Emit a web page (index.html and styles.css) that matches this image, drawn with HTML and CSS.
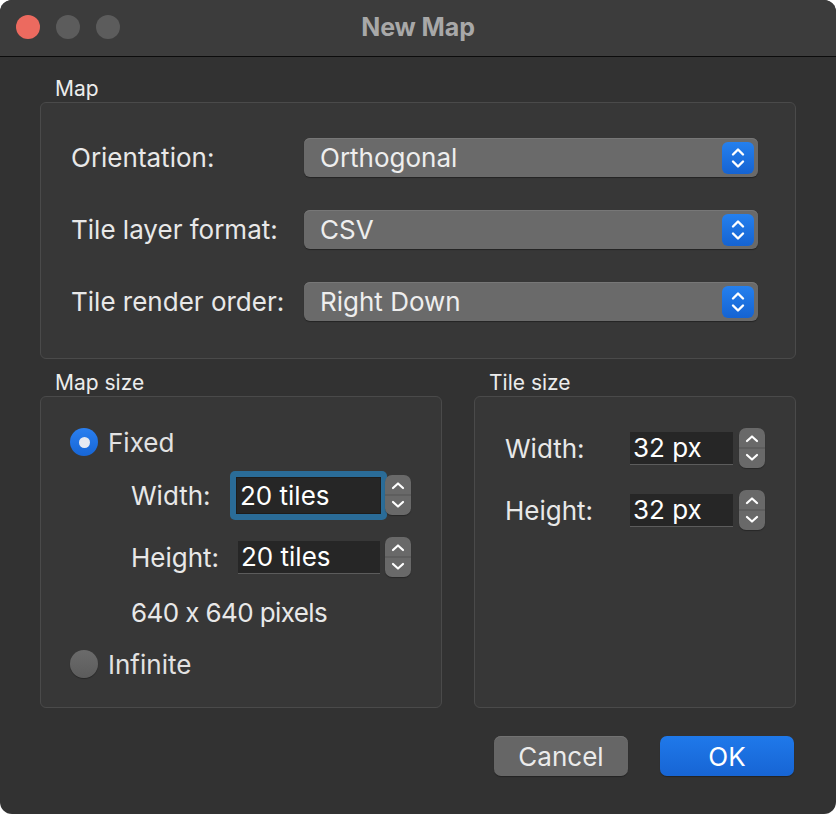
FILE: index.html
```html
<!DOCTYPE html>
<html lang="en">
<head>
<meta charset="utf-8">
<title>New Map</title>
<link rel="stylesheet" href="styles.css">
</head>
<body>
<div class="window">
  <div class="titlebar">
    <div class="lights">
      <span class="light red"></span>
      <span class="light gray"></span>
      <span class="light gray"></span>
    </div>
    <div class="title">New Map</div>
  </div>
  <div class="content">
    <div class="group-label">Map</div>
    <div class="box map-box">
      <div class="form-row">
        <span class="lbl">Orientation:</span>
        <div class="popup"><span>Orthogonal</span><span class="popup-btn"><svg width="32" height="32" viewBox="0 0 32 32"><path d="M11 12.5 L16 7.5 L21 12.5 M11 19.5 L16 24.5 L21 19.5" fill="none" stroke="#fff" stroke-width="2.4" stroke-linecap="round" stroke-linejoin="round"/></svg></span></div>
      </div>
      <div class="form-row">
        <span class="lbl">Tile layer format:</span>
        <div class="popup"><span>CSV</span><span class="popup-btn"><svg width="32" height="32" viewBox="0 0 32 32"><path d="M11 12.5 L16 7.5 L21 12.5 M11 19.5 L16 24.5 L21 19.5" fill="none" stroke="#fff" stroke-width="2.4" stroke-linecap="round" stroke-linejoin="round"/></svg></span></div>
      </div>
      <div class="form-row">
        <span class="lbl">Tile render order:</span>
        <div class="popup"><span>Right Down</span><span class="popup-btn"><svg width="32" height="32" viewBox="0 0 32 32"><path d="M11 12.5 L16 7.5 L21 12.5 M11 19.5 L16 24.5 L21 19.5" fill="none" stroke="#fff" stroke-width="2.4" stroke-linecap="round" stroke-linejoin="round"/></svg></span></div>
      </div>
    </div>

    <div class="lower">
      <div class="col">
        <div class="group-label small">Map size</div>
        <div class="box size-box">
          <div class="radio-row first">
            <span class="radio on"><span class="dot"></span></span>
            <span class="radio-text">Fixed</span>
          </div>
          <div class="spin-row r1">
            <span class="slbl">Width:</span>
            <span class="ring"><span class="field focused">20 tiles</span></span>
            <span class="stepper"><svg width="26" height="40" viewBox="0 0 26 40"><path d="M8 13 L13 8.5 L18 13 M8 27 L13 31.5 L18 27" fill="none" stroke="#fff" stroke-width="2.2" stroke-linecap="round" stroke-linejoin="round"/><line x1="0" y1="20" x2="26" y2="20" stroke="#555" stroke-width="1"/></svg></span>
          </div>
          <div class="spin-row r2">
            <span class="slbl">Height:</span>
            <span class="field">20 tiles</span>
            <span class="stepper"><svg width="26" height="40" viewBox="0 0 26 40"><path d="M8 13 L13 8.5 L18 13 M8 27 L13 31.5 L18 27" fill="none" stroke="#fff" stroke-width="2.2" stroke-linecap="round" stroke-linejoin="round"/><line x1="0" y1="20" x2="26" y2="20" stroke="#555" stroke-width="1"/></svg></span>
          </div>
          <div class="pixels">640 x 640 pixels</div>
          <div class="radio-row last">
            <span class="radio off"></span>
            <span class="radio-text">Infinite</span>
          </div>
        </div>
      </div>
      <div class="col">
        <div class="group-label small">Tile size</div>
        <div class="box tile-box">
          <div class="spin-row t1">
            <span class="tlbl">Width:</span>
            <span class="field short">32 px</span>
            <span class="stepper"><svg width="26" height="40" viewBox="0 0 26 40"><path d="M8 13 L13 8.5 L18 13 M8 27 L13 31.5 L18 27" fill="none" stroke="#fff" stroke-width="2.2" stroke-linecap="round" stroke-linejoin="round"/><line x1="0" y1="20" x2="26" y2="20" stroke="#555" stroke-width="1"/></svg></span>
          </div>
          <div class="spin-row t2">
            <span class="tlbl">Height:</span>
            <span class="field short">32 px</span>
            <span class="stepper"><svg width="26" height="40" viewBox="0 0 26 40"><path d="M8 13 L13 8.5 L18 13 M8 27 L13 31.5 L18 27" fill="none" stroke="#fff" stroke-width="2.2" stroke-linecap="round" stroke-linejoin="round"/><line x1="0" y1="20" x2="26" y2="20" stroke="#555" stroke-width="1"/></svg></span>
          </div>
        </div>
      </div>
    </div>

    <div class="buttons">
      <button class="btn cancel">Cancel</button>
      <button class="btn ok">OK</button>
    </div>
  </div>
</div>
</body>
</html>
```

FILE: styles.css
```css
* { box-sizing: border-box; }
html, body { margin: 0; padding: 0; background: #ffffff; }
body {
  font-family: Inter, "Helvetica Neue", "Liberation Sans", sans-serif;
  font-feature-settings: "calt" 0;
  color: #e6e6e6;
}
.window {
  width: 836px;
  height: 814px;
  background: #323232;
  border-radius: 12px;
  overflow: hidden;
  display: flex;
  flex-direction: column;
}
.titlebar {
  height: 57px;
  flex: none;
  background: #3c3c3c;
  border-bottom: 1px solid #0c0c0c;
  display: flex;
  align-items: center;
  justify-content: center;
  position: relative;
}
.lights {
  position: absolute;
  left: 16px;
  top: 15px;
  display: flex;
  gap: 16px;
}
.light {
  width: 24px;
  height: 24px;
  border-radius: 50%;
  display: block;
}
.light.red { background: #ec6a5f; }
.light.gray { background: #5c5c5c; }
.title {
  font-size: 25px;
  font-weight: 700;
  color: #a8a8a8;
  margin-top: -2px;
  letter-spacing: -0.1px;
}
.content {
  padding: 0 40px;
  display: flex;
  flex-direction: column;
}
.group-label {
  font-size: 21px;
  line-height: 24px;
  height: 24px;
  margin-top: 20px;
  padding-left: 15px;
  color: #ececec;
  margin-bottom: 1px;
}
.box {
  background: #373737;
  border: 1px solid #4a4a4a;
  border-radius: 6px;
}
.map-box {
  height: 257px;
  padding: 35px 37px 0 30px;
  display: flex;
  flex-direction: column;
  gap: 33px;
}
.form-row {
  height: 39px;
  display: flex;
  align-items: center;
}
.lbl {
  width: 233px;
  font-size: 26px;
  color: #e8e8e8;
}
.popup {
  flex: 1;
  height: 39px;
  background: #6a6a6a;
  border-radius: 6px;
  box-shadow: inset 0 1px 0 #777, 0 1px 1px rgba(0,0,0,0.35);
  display: flex;
  align-items: center;
  justify-content: space-between;
  padding: 0 4px 0 16px;
  font-size: 26px;
  color: #eeeeee;
}
.popup-btn {
  width: 32px;
  height: 32px;
  border-radius: 6px;
  background: linear-gradient(#2580ee, #1563d2);
  display: flex;
  align-items: center;
  justify-content: center;
}
.lower {
  display: grid;
  grid-template-columns: 402px 322px;
  gap: 32px;
  margin-top: 12px;
}
.group-label.small {
  margin-top: 0;
  height: 24px;
}
.size-box {
  height: 312px;
  padding: 31px 0 0 29px;
  display: flex;
  flex-direction: column;
}
.radio-row {
  height: 28px;
  display: flex;
  align-items: center;
  gap: 10px;
}
.radio {
  width: 28px;
  height: 28px;
  border-radius: 50%;
  display: flex;
  align-items: center;
  justify-content: center;
}
.radio.on { background: linear-gradient(#2a7ff0, #1766d6); }
.radio.on .dot { width: 11px; height: 11px; border-radius: 50%; background: #e6e9f2; }
.radio.off { background: linear-gradient(#6b6b6b, #5c5c5c); box-shadow: 0 1px 1px rgba(0,0,0,0.3); }
.radio-text { font-size: 26px; color: #e2e2e2; }
.spin-row {
  height: 40px;
  display: flex;
  align-items: center;
}
.spin-row.r1 { margin-top: 19px; padding-left: 61px; }
.spin-row.r2 { margin-top: 22px; padding-left: 61px; }
.slbl { width: 107px; flex: none; font-size: 26px; color: #e8e8e8; }
.tlbl { width: 125px; flex: none; font-size: 26px; color: #e8e8e8; }
.ring {
  margin-left: -8px;
  padding: 6px;
  background: #2a6c98;
  border-radius: 5px;
  display: flex;
  flex: none;
}
.field {
  flex: none;
  width: 142px;
  height: 33px;
  background: #262626;
  border-bottom: 1px solid #5c5c5c;
  font-size: 26px;
  color: #ffffff;
  padding-left: 3px;
  display: flex;
  align-items: center;
}
.field.focused { height: 37px; border: 1px solid #1d1d1d; width: 145px; padding-left: 3px; }
.field.short { width: 103px; }
.stepper {
  flex: none;
  margin-left: 5px;
  width: 26px;
  height: 40px;
  border-radius: 7px;
  background: #696969;
  box-shadow: 0 1px 1px rgba(0,0,0,0.3);
  display: block;
}
.ring + .stepper { margin-left: -2px; }
.stepper svg { display: block; }
.pixels {
  margin-top: 24px;
  padding-left: 61px;
  font-size: 26px;
  line-height: 24px;
  letter-spacing: -0.6px;
  color: #e8e8e8;
}
.radio-row.last { margin-top: 25px; }
.tile-box {
  height: 312px;
  padding: 31px 0 0 30px;
  display: flex;
  flex-direction: column;
}
.spin-row.t2 { margin-top: 22px; }
.tile-box .stepper { margin-left: 6px; }
.buttons {
  margin-top: 28px;
  padding-right: 2px;
  display: flex;
  justify-content: flex-end;
  gap: 32px;
}
.btn {
  width: 134px;
  height: 40px;
  border: none;
  border-radius: 7px;
  font-family: inherit;
  font-size: 26px;
  color: #ebebeb;
  padding: 0;
}
.btn.cancel { background: #666666; box-shadow: inset 0 1px 0 #727272, 0 1px 1px rgba(0,0,0,0.3); }
.btn.ok { background: linear-gradient(#1f79ea, #1765d4); color: #ffffff; box-shadow: 0 1px 1px rgba(0,0,0,0.3); }
```
